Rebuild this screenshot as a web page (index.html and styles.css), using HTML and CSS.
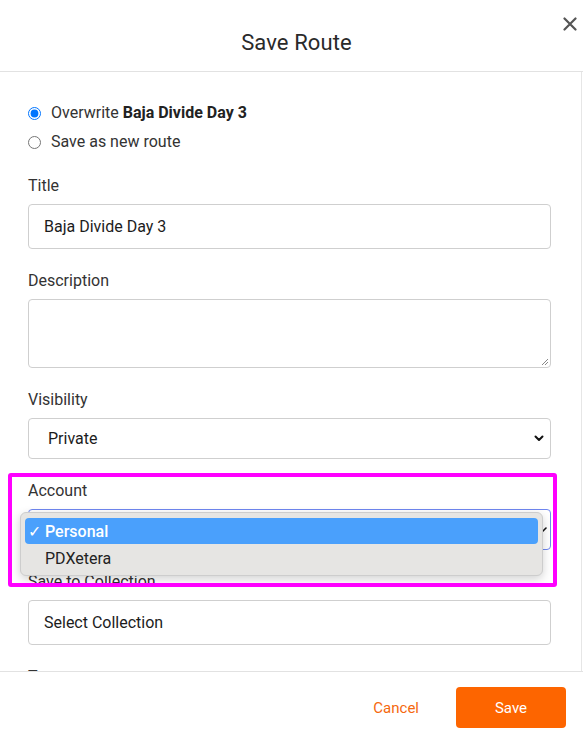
FILE: index.html
```html
<!DOCTYPE html>
<html lang="en">
<head>
<meta charset="utf-8">
<title>Save Route</title>
<link rel="stylesheet" href="styles.css">
</head>
<body>
<div class="modal">
  <header class="modal-header">
    <h1 class="modal-title">Save Route</h1>
    <button class="close" aria-label="Close">
      <svg width="14" height="14" viewBox="0 0 14 14"><path d="M1.5 1.5 L12.5 12.5 M12.5 1.5 L1.5 12.5" stroke="#555" stroke-width="2.2" stroke-linecap="round" fill="none"/></svg>
    </button>
  </header>

  <main class="modal-body">
    <div class="radios">
      <label class="radio-row"><input type="radio" name="mode" checked> <span>Overwrite <b>Baja Divide Day 3</b></span></label>
      <label class="radio-row"><input type="radio" name="mode"> <span>Save as new route</span></label>
    </div>

    <div class="field">
      <label class="field-label">Title</label>
      <div class="input input-tall">Baja Divide Day 3</div>
    </div>

    <div class="field">
      <label class="field-label">Description</label>
      <div class="textarea">
        <svg class="grip" width="9" height="9" viewBox="0 0 9 9"><path d="M8 2 L2 8 M8 5 L5 8" stroke="#888" stroke-width="1" fill="none"/></svg>
      </div>
    </div>

    <div class="field">
      <label class="field-label">Visibility</label>
      <div class="select">
        <span class="select-value">Private</span>
        <svg class="chev" width="10" height="7" viewBox="0 0 10 7"><path d="M1.5 1.5 L5 5 L8.5 1.5" stroke="#111" stroke-width="2" fill="none" stroke-linecap="round" stroke-linejoin="round"/></svg>
      </div>
    </div>

    <div class="field account">
      <label class="field-label">Account</label>
      <div class="select select-focus">
        <span class="select-value">Personal</span>
        <svg class="chev chev-small" width="6" height="8" viewBox="0 0 6 8"><path d="M1 6 L5 2" stroke="#111" stroke-width="1.6" fill="none" stroke-linecap="round"/></svg>
      </div>
      <ul class="popup">
        <li class="opt opt-active"><span class="check">✓</span>Personal</li>
        <li class="opt">PDXetera</li>
      </ul>
      <div class="highlight"></div>
    </div>

    <div class="field">
      <label class="field-label">Save to Collection</label>
      <div class="input input-tall">Select Collection</div>
    </div>

    <div class="field">
      <label class="field-label">Tags</label>
    </div>
  </main>

  <footer class="modal-footer">
    <button class="btn-cancel">Cancel</button>
    <button class="btn-save">Save</button>
  </footer>
</div>
</body>
</html>
```

FILE: styles.css
```css
* { box-sizing: border-box; }

html, body {
  margin: 0;
  padding: 0;
  background: #fff;
}

body {
  font-family: Roboto, "Liberation Sans", Arial, sans-serif;
  color: #2b2b2b;
  width: 583px;
  height: 740px;
  overflow: hidden;
}

.modal {
  display: flex;
  flex-direction: column;
  height: 740px;
}

.modal-header {
  position: relative;
  height: 72px;
  border-bottom: 1px solid #e2e2e2;
  display: flex;
  align-items: center;
  justify-content: center;
  padding-left: 10px;
  padding-top: 13px;
  flex: none;
}

.modal-title {
  margin: 0;
  font-size: 22px;
  font-weight: 400;
  color: #2a2a2a;
  letter-spacing: 0.1px;
}

.close {
  position: absolute;
  top: 16px;
  right: 5px;
  width: 16px;
  height: 16px;
  padding: 0;
  border: 0;
  background: none;
  display: flex;
  align-items: center;
  justify-content: center;
}

.modal-body {
  height: 599px;
  flex: none;
  width: 582px;
  border-right: 1px solid #e6e6e6;
  overflow: hidden;
  padding: 31px 30px 0 28px;
}

.radios {
  display: flex;
  flex-direction: column;
  gap: 9px;
  margin-bottom: 24px;
}

.radio-row {
  display: flex;
  align-items: center;
  gap: 10px;
  font-size: 16px;
  line-height: 20px;
  color: #333;
}

.radio-row input {
  margin: 0;
  width: 13px;
  height: 13px;
}

.radio-row b {
  font-weight: 700;
  color: #222;
}

.field {
  display: flex;
  flex-direction: column;
  gap: 8px;
  margin-bottom: 22px;
}

.field-label {
  font-size: 16px;
  line-height: 20px;
  color: #333;
}

.input {
  height: 45px;
  border: 1px solid #cfcfcf;
  border-radius: 4px;
  padding: 0 15px;
  display: flex;
  align-items: center;
  font-size: 16px;
  color: #1c1c1c;
}

.textarea {
  position: relative;
  height: 69px;
  border: 1px solid #cfcfcf;
  border-radius: 4px;
}

.grip {
  position: absolute;
  right: 1px;
  bottom: 1px;
}

.select {
  position: relative;
  height: 41px;
  border: 1px solid #cfcfcf;
  border-radius: 4px;
  padding: 0 19px;
  display: flex;
  align-items: center;
  justify-content: space-between;
  font-size: 16px;
  color: #1c1c1c;
}

.select-focus {
  border-color: #6f86f0;
}

.chev {
  margin-right: -13px;
}

.chev-small {
  margin-right: -16px;
}

.account {
  position: relative;
}

.popup {
  position: absolute;
  left: -8px;
  top: 31px;
  width: 523px;
  height: 64px;
  margin: 0;
  padding: 5px 4px;
  list-style: none;
  background: #e6e5e3;
  border: 1px solid #cdcdcd;
  border-radius: 6px;
  box-shadow: 0 3px 10px rgba(0, 0, 0, 0.18);
  z-index: 2;
}

.opt {
  height: 26px;
  display: flex;
  align-items: center;
  padding-left: 20px;
  font-size: 16px;
  color: #222;
  border-radius: 4px;
  position: relative;
}

.opt-active {
  background: #4aa0fc;
  color: #fff;
  font-weight: 500;
  margin-bottom: 1px;
}

.check {
  position: absolute;
  left: 3px;
  font-size: 16px;
  font-weight: 400;
}

.highlight {
  position: absolute;
  left: -20px;
  top: -8px;
  width: 549px;
  height: 114px;
  border: 4px solid #ff00ff;
  border-radius: 3px;
  pointer-events: none;
  z-index: 3;
}

.modal-footer {
  flex: 1;
  display: flex;
  align-items: center;
  justify-content: flex-end;
  gap: 37px;
  padding: 3px 17px 0 0;
  border-top: 1px solid #e2e2e2;
}

.btn-cancel {
  border: 0;
  background: none;
  font-family: inherit;
  font-size: 15px;
  color: #f5680e;
  padding: 0;
}

.btn-save {
  width: 110px;
  height: 41px;
  border: 0;
  border-radius: 4px;
  background: #fd6500;
  color: #fff;
  font-family: inherit;
  font-size: 15px;
}
```
